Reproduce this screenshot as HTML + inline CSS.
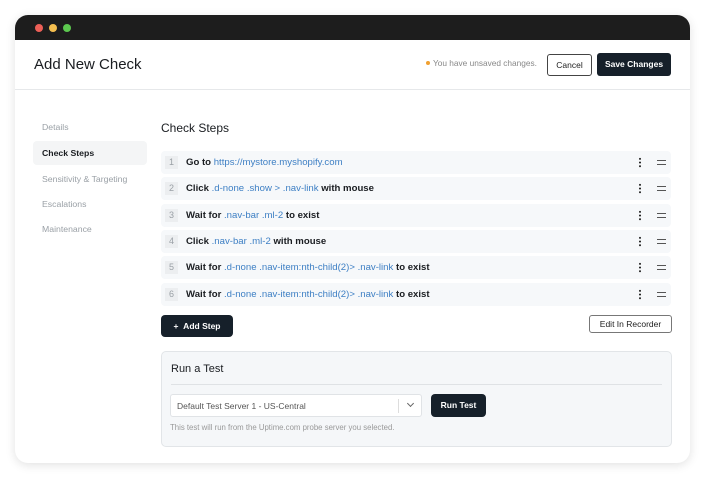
<!DOCTYPE html>
<html><head><style>
*{box-sizing:border-box;margin:0;padding:0}
body{width:705px;height:481px;background:#fff;font-family:"Liberation Sans",sans-serif;position:relative;overflow:hidden;color:#1a1d21}
.win{position:absolute;left:15px;top:15px;width:675px;height:448px;border-radius:13px;background:#fff;box-shadow:0 2px 10px rgba(0,0,0,.12);overflow:hidden}
.bar{height:25px;background:#1d1d1d}
.dot{position:absolute;top:9px;width:8px;height:8px;border-radius:50%}
.a{position:absolute}
.hdr{position:absolute;left:0;top:25px;width:675px;height:50px;border-bottom:1px solid #e6e8ea}
.side{position:absolute;left:27px;font-size:8.7px;color:#9aa0a6}
.row{position:absolute;left:146px;width:510px;height:23px;background:#f6f8fa;border-radius:4px;font-size:9.6px;font-weight:bold;color:#1a1d21}
.row .n{position:absolute;left:4px;top:5px;width:13px;height:13px;background:#eceef0;color:#9aa0a6;font-weight:normal;font-size:9px;text-align:center;line-height:13px}
.row .t{position:absolute;left:25px;top:6px;white-space:nowrap}
.row .t span{color:#3d7fc4;font-weight:normal}
.row .k{position:absolute;left:478px;top:6px;width:2px;height:11px;background:radial-gradient(circle,#222 0.9px,transparent 1.1px) 0 0/2px 3.7px}
.row .e{position:absolute;left:496px;top:9px;width:9px;height:5px;border-top:1.2px solid #555;border-bottom:1.2px solid #555}
.btn{position:absolute;border-radius:3px;font-size:8.5px;font-weight:bold;text-align:center}
</style></head><body>
<div class="win">
<div class="bar"></div>
<div class="dot" style="left:20px;background:#ec5f57"></div>
<div class="dot" style="left:34px;background:#f4be4f"></div>
<div class="dot" style="left:48px;background:#5cc84f"></div>
<div class="hdr">
<div class="a" style="left:19px;top:16px;font-size:15px;font-weight:500">Add New Check</div>
<div class="a" style="left:411px;top:21px;width:4px;height:4px;border-radius:50%;background:#f0a030"></div>
<div class="a" style="left:418px;top:18px;font-size:8.3px;color:#888">You have unsaved changes.</div>
<div class="btn" style="left:532px;top:14px;width:45px;height:22px;border:1px solid #444;line-height:20px;font-weight:normal;color:#222">Cancel</div>
<div class="btn" style="left:582px;top:13px;width:74px;height:23px;background:#16202a;color:#fff;line-height:23px">Save Changes</div>
</div>
<div class="a" style="left:18px;top:126px;width:114px;height:24px;background:#f4f5f6;border-radius:4px"></div>
<div class="side" style="top:107px">Details</div>
<div class="side" style="top:133px;color:#1a1d21;font-weight:bold">Check Steps</div>
<div class="side" style="top:159px">Sensitivity &amp; Targeting</div>
<div class="side" style="top:184px">Escalations</div>
<div class="side" style="top:209px">Maintenance</div>
<div class="a" style="left:146px;top:106px;font-size:12px;font-weight:500">Check Steps</div>
<div class="row" style="top:136px"><div class="n">1</div><div class="t">Go to <span>https://mystore.myshopify.com</span></div><div class="k"></div><div class="e"></div></div>
<div class="row" style="top:162px"><div class="n">2</div><div class="t">Click <span>.d-none .show &gt; .nav-link</span> with mouse</div><div class="k"></div><div class="e"></div></div>
<div class="row" style="top:189px"><div class="n">3</div><div class="t">Wait for <span>.nav-bar .ml-2</span> to exist</div><div class="k"></div><div class="e"></div></div>
<div class="row" style="top:215px"><div class="n">4</div><div class="t">Click <span>.nav-bar .ml-2</span> with mouse</div><div class="k"></div><div class="e"></div></div>
<div class="row" style="top:241px"><div class="n">5</div><div class="t">Wait for <span>.d-none .nav-item:nth-child(2)&gt; .nav-link</span> to exist</div><div class="k"></div><div class="e"></div></div>
<div class="row" style="top:268px"><div class="n">6</div><div class="t">Wait for <span>.d-none .nav-item:nth-child(2)&gt; .nav-link</span> to exist</div><div class="k"></div><div class="e"></div></div>
<div class="btn" style="left:146px;top:300px;width:72px;height:22px;background:#16202a;color:#fff;line-height:22px;border-radius:4px">+&nbsp;&nbsp;Add Step</div>
<div class="btn" style="left:574px;top:300px;width:83px;height:18px;border:1px solid #777;line-height:16px;font-weight:normal;color:#222">Edit In Recorder</div>
<div class="a" style="left:146px;top:336px;width:511px;height:96px;background:#f5f7f9;border:1px solid #e2e5e8;border-radius:5px">
<div class="a" style="left:9px;top:11px;font-size:11px;font-weight:500">Run a Test</div>
<div class="a" style="left:9px;top:32px;width:491px;height:1px;background:#dfe2e5"></div>
<div class="a" style="left:8px;top:42px;width:252px;height:23px;background:#fff;border:1px solid #e0e3e6;border-radius:3px;font-size:8.5px;color:#555;padding:6px 0 0 6px">Default Test Server 1 - US-Central
<div class="a" style="left:227px;top:4px;width:1px;height:14px;background:#ddd"></div>
<div class="a" style="left:237px;top:6px;width:5px;height:5px;border-right:1px solid #666;border-bottom:1px solid #666;transform:rotate(45deg)"></div></div>
<div class="btn" style="left:269px;top:42px;width:55px;height:23px;background:#16202a;color:#fff;line-height:23px;border-radius:4px">Run Test</div>
<div class="a" style="left:8px;top:71px;font-size:7.8px;color:#999">This test will run from the Uptime.com probe server you selected.</div>
</div>
</div>
</body></html>
